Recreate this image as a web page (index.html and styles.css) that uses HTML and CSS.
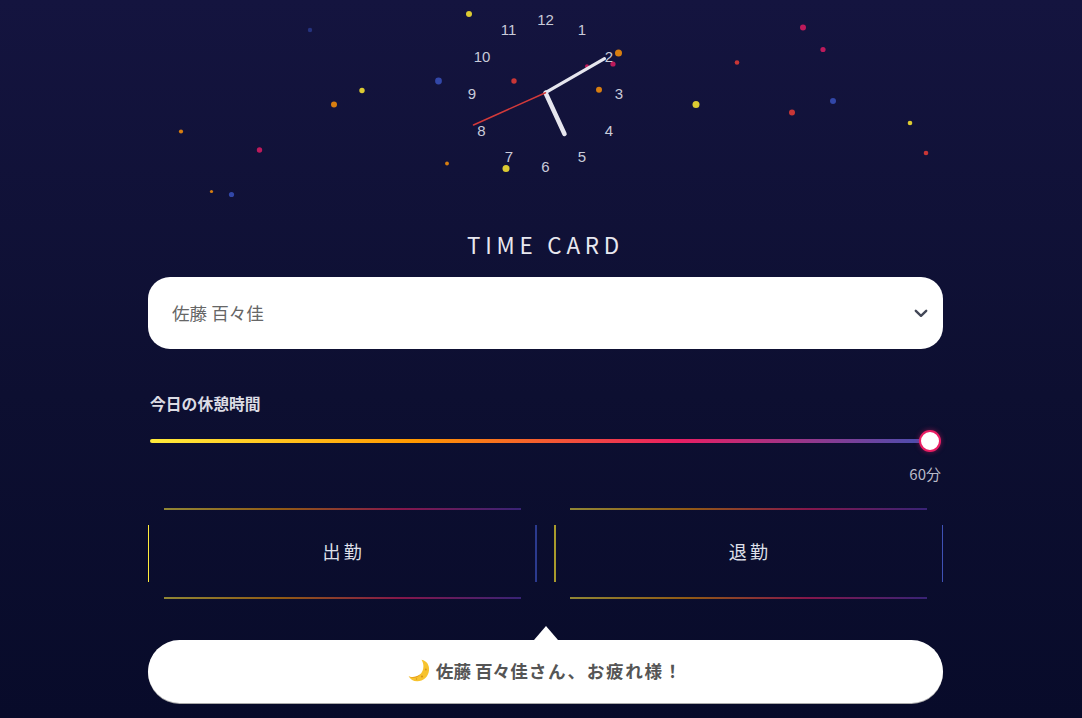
FILE: index.html
```html
<!DOCTYPE html>
<html lang="ja">
<head>
  <meta charset="UTF-8">
  <meta name="viewport" content="width=device-width, initial-scale=1">
  <title>Time Card</title>
  <link rel="stylesheet" href="styles.css">
</head>
<body>
  <svg class="sky" width="1082" height="228" viewBox="0 0 1082 228">
    <!-- 星 -->
    <g class="stars">
      <circle class="yellow" cx="469" cy="14" r="3"/>
      <circle class="blue dim" cx="310" cy="30" r="2.200"/>
      <circle class="blue" cx="438.500" cy="81" r="3.400"/>
      <circle class="red" cx="514" cy="81" r="2.700"/>
      <circle class="orange" cx="334" cy="104.500" r="3"/>
      <circle class="yellow" cx="362" cy="90.500" r="2.700"/>
      <circle class="orange" cx="181" cy="131.500" r="2.100"/>
      <circle class="pink" cx="259.500" cy="150" r="2.700"/>
      <circle class="orange" cx="211.500" cy="191.500" r="1.600"/>
      <circle class="blue" cx="231.500" cy="194.500" r="2.600"/>
      <circle class="orange" cx="447" cy="163.500" r="1.900"/>
      <circle class="yellow" cx="506" cy="168.500" r="3.500"/>
      <circle class="orange" cx="599" cy="89.700" r="3"/>
      <circle class="orange" cx="618.500" cy="53" r="3.500"/>
      <circle class="pink" cx="613" cy="64" r="2.600"/>
      <circle class="pink" cx="587" cy="66.300" r="2"/>
      <circle class="yellow" cx="696" cy="104.500" r="3.500"/>
      <circle class="red" cx="737" cy="62.500" r="2.300"/>
      <circle class="pink" cx="803" cy="27.500" r="3"/>
      <circle class="pink" cx="823" cy="49.500" r="2.600"/>
      <circle class="red" cx="792" cy="112.500" r="3"/>
      <circle class="blue" cx="833" cy="101" r="3"/>
      <circle class="yellow" cx="910" cy="123" r="2.300"/>
      <circle class="red" cx="926" cy="153" r="2.300"/>
    </g>

    <!-- 時計 -->
    <g class="clock-num" text-anchor="middle">
      <text x="545.500" y="25">12</text>
      <text x="582" y="35">1</text>
      <text x="609" y="62">2</text>
      <text x="619" y="99">3</text>
      <text x="609" y="136">4</text>
      <text x="582" y="162">5</text>
      <text x="545.500" y="172">6</text>
      <text x="509" y="162">7</text>
      <text x="481.500" y="136">8</text>
      <text x="472" y="99">9</text>
      <text x="482" y="62">10</text>
      <text x="508.500" y="35">11</text>
    </g>
    <line class="hand-hour" x1="545.500" y1="92.700" x2="564.500" y2="134"/>
    <line class="hand-min" x1="545.500" y1="92.700" x2="604.500" y2="58.700"/>
    <line class="hand-sec" x1="545.500" y1="92.700" x2="473.500" y2="125"/>
  </svg>

  <main class="card">
    <h1 class="title">TIME CARD</h1>

    <div class="staff-box">
      <select class="staff">
        <option>佐藤 百々佳</option>
        <option>田中 太郎</option>
      </select>
      <svg class="staff-arrow" width="14" height="9" viewBox="0 0 14 9">
        <path d="M1.800 1.800 7 6.800 12.200 1.800" fill="none" stroke="#434757" stroke-width="2.400" stroke-linecap="round" stroke-linejoin="round"/>
      </svg>
    </div>

    <div class="break-box">
      <label class="break-label" for="break">今日の休憩時間</label>
      <input class="break-range" type="range" id="break" min="0" max="60" step="5" value="60">
      <div class="break-value">60分</div>
    </div>

    <div class="punch-row">
      <button class="punch punch-in">出勤</button>
      <button class="punch punch-out">退勤</button>
    </div>

    <div class="message">
      <svg class="moon" width="22" height="23" viewBox="0 0 22 23">
        <path fill="#f7c32e" d="M13.500 .8 C19 1.800 21.500 6.500 21 11.500 C20.400 18 15 22.500 9 22.300 C5.500 22.200 2.200 20.300 .6 17.200 C5 19 10 17.800 13 14.500 C16 11 16.300 5 13.500 .8 Z"/>
        <path fill="#e59a1c" d="M.6 17.200 C5 19 10 17.800 13 14.500 C10.500 18.800 5.500 20.300 .6 17.200 Z"/>
        <circle cx="17.800" cy="10.500" r="1" fill="#d9941a"/>
        <circle cx="14" cy="17.500" r="1.100" fill="#d9941a"/>
        <circle cx="8.500" cy="20" r=".7" fill="#d9941a"/>
      </svg>
      <span class="message-text"><span class="message-name">佐藤 百々佳</span><span class="message-rest">さん、お疲れ様！</span></span>
    </div>
  </main>
</body>
</html>
```
FILE: styles.css
```css
:root {
  --grad: #ffeb3b, #ff9800, #e91e63, #3f51b5;
  --jp: "Noto Sans CJK JP", "Noto Sans", sans-serif;
}

html, body {
  height: 100%;
}

body {
  margin: 0;
  overflow: hidden;
  background: linear-gradient(180deg, #14143f 0%, #0d0f31 55%, #080b2a 100%);
  font-family: var(--jp);
  color: #e8e8f0;
}

.sky {
  display: block;
}

.stars {
  filter: blur(.3px);
}

.yellow { fill: #dcca32; }
.orange { fill: #d87e10; }
.red { fill: #c93636; }
.pink { fill: #bd1a5b; }
.blue { fill: #3247a8; }
.dim { opacity: .6; }

.clock-num {
  font-family: "Liberation Sans", sans-serif;
  font-size: 15px;
  fill: #c9cbd9;
}

.hand-hour, .hand-min, .hand-sec {
  stroke-linecap: round;
}

.hand-hour {
  stroke: #e6e6ee;
  stroke-width: 4.500;
}

.hand-min {
  stroke: #e6e6ee;
  stroke-width: 3.200;
}

.hand-sec {
  stroke: #d33a3a;
  stroke-width: 1.500;
}

.card {
  width: 795px;
  margin-left: 148px;
}

.title {
  margin: 0 0 17px;
  height: 32px;
  font-size: 22.400px;
  font-weight: 400;
  line-height: 33px;
  letter-spacing: 4.800px;
  text-align: center;
  color: #e8e8f0;
}

.staff-box {
  position: relative;
}

.staff {
  display: block;
  width: 100%;
  height: 72px;
  padding: 0 24px 2px;
  border: none;
  border-radius: 22px;
  background-color: #fff;
  font-family: var(--jp);
  font-size: 17.600px;
  color: #666;
  appearance: none;
  -webkit-appearance: none;
}

.staff-arrow {
  position: absolute;
  top: 32px;
  right: 15px;
}

.break-box {
  margin-top: 44px;
  padding: 0 2px;
}

.break-label {
  display: block;
  font-size: 15.800px;
  font-weight: 700;
  line-height: 22px;
  color: #dcdce4;
}

.break-range {
  display: block;
  width: 100%;
  height: 24px;
  margin: 14px 0 0;
  background: transparent;
  appearance: none;
  -webkit-appearance: none;
}

.break-range::-webkit-slider-runnable-track {
  height: 4px;
  border-radius: 2px;
  background: linear-gradient(90deg, var(--grad));
}

.break-range::-webkit-slider-thumb {
  -webkit-appearance: none;
  box-sizing: border-box;
  width: 22px;
  height: 22px;
  margin-top: -9px;
  border: 2.500px solid #e91e63;
  border-radius: 50%;
  background: #fff;
  box-shadow: 0 0 5px rgba(233, 30, 99, .5);
}

.break-value {
  margin-top: 11px;
  font-size: 15px;
  line-height: 20px;
  text-align: right;
  color: #b9bac8;
}

.punch-row {
  display: flex;
  gap: 17.500px;
  margin-top: 24px;
}

.punch {
  flex: 1;
  display: flex;
  flex-direction: column;
  align-items: stretch;
  justify-content: space-between;
  height: 91px;
  padding: 0;
  border: none;
  background-color: transparent;
  background-repeat: no-repeat;
  font-family: var(--jp);
  font-size: 18px;
  line-height: 24px;
  letter-spacing: 3.500px;
  text-indent: 3px;
  color: #dfe0ea;
}

.punch::before,
.punch::after {
  content: "";
  height: 2px;
  margin: 0 16px;
  background: linear-gradient(90deg, #ffeb3b, #ff9800, #e91e63, #5e35b1);
  opacity: .55;
}

/* 文字を少し上に寄せる */
.punch::after {
  margin-top: 6px;
}

.punch-in {
  background-image: linear-gradient(#ffeb3b, #ffeb3b), linear-gradient(#2b3a8e, #2b3a8e);
  background-size: 1px 57px, 2px 57px;
  background-position: 0 50%, 100% 50%;
}

.punch-out {
  background-image: linear-gradient(#a89a2c, #a89a2c), linear-gradient(#3f51b5, #3f51b5);
  background-size: 2px 57px, 1px 57px;
  background-position: 0 50%, 100% 50%;
}

.message {
  position: relative;
  display: flex;
  align-items: center;
  justify-content: center;
  gap: 6px;
  box-sizing: border-box;
  height: 63px;
  margin-top: 41px;
  padding-bottom: 2px;
  border-radius: 32px;
  background: #fff;
  box-shadow: 0 1px 0 #aaa;
  font-size: 17.600px;
  font-weight: 700;
  color: #555;
}

.message-name {
  margin-right: 1px;
}

.message-rest {
  letter-spacing: 1.700px;
}

/* 吹き出しの三角 */
.message::before {
  content: "";
  position: absolute;
  top: -14px;
  left: 50%;
  margin-left: -12px;
  border-left: 12px solid transparent;
  border-right: 12px solid transparent;
  border-bottom: 14px solid #fff;
}
```
